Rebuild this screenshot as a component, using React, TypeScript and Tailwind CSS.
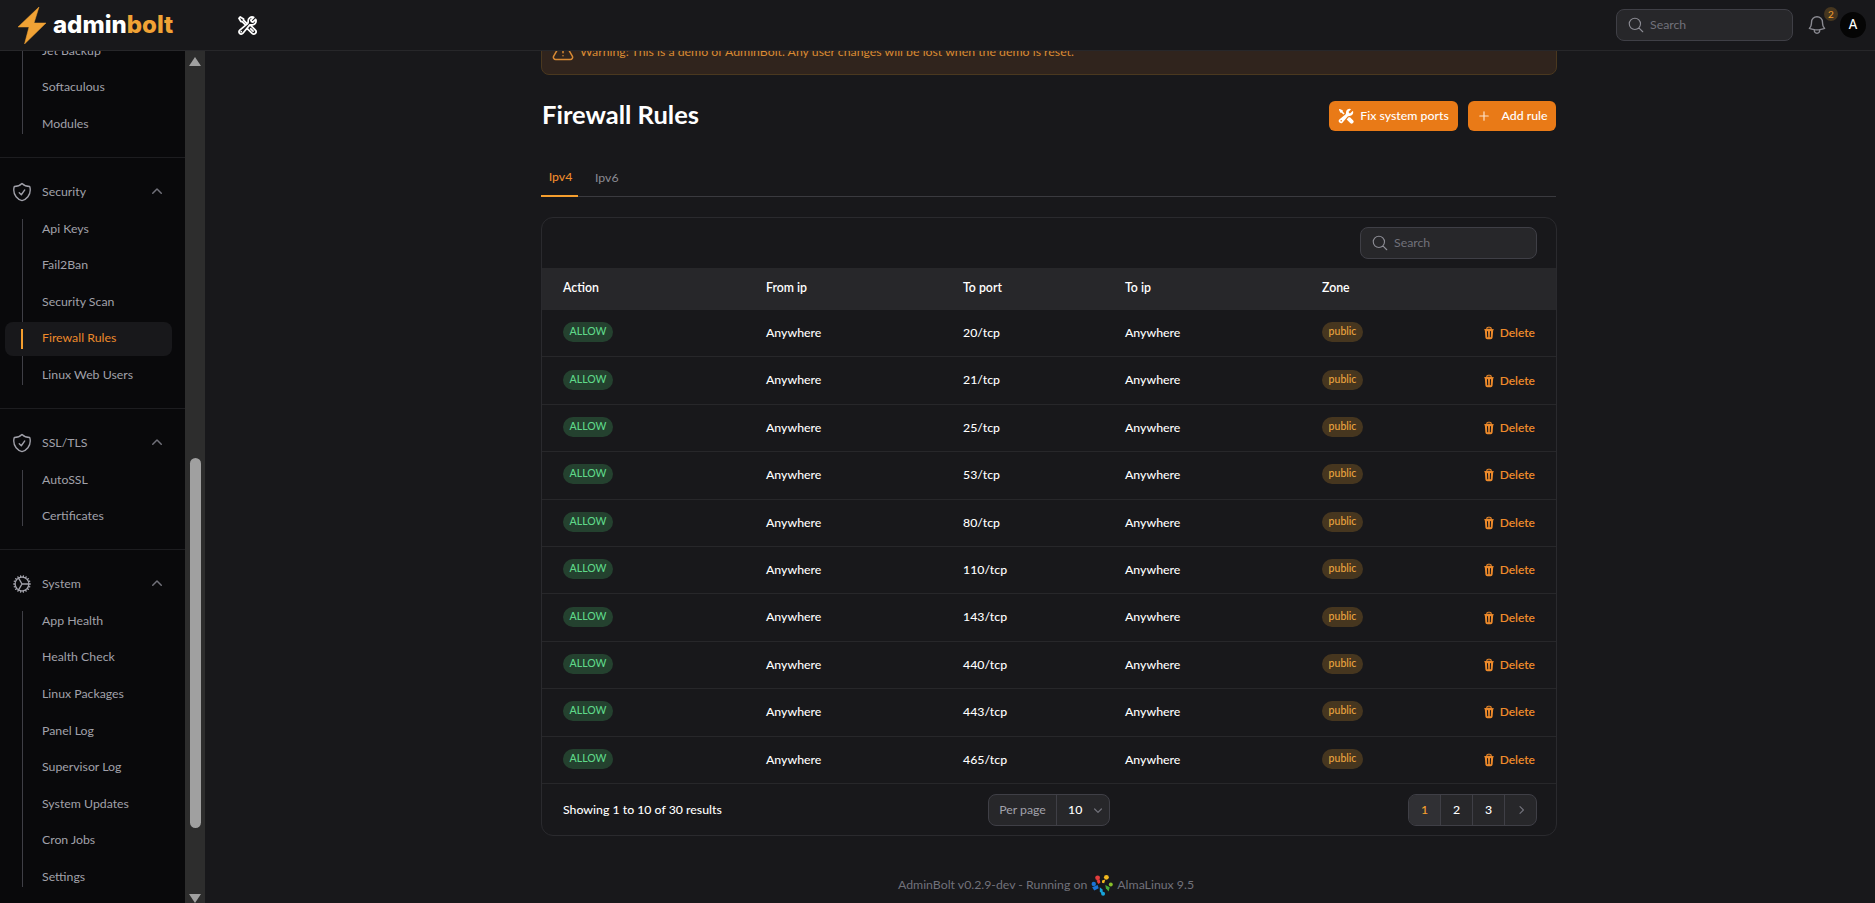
import React from "react";
import {
  HiOutlineWrenchScrewdriver, HiOutlineShieldCheck, HiOutlineCog, HiOutlineBell, HiOutlineMagnifyingGlass,
  HiMiniChevronUp, HiMiniChevronDown, HiMiniChevronRight, HiOutlineExclamationTriangle, HiMiniWrenchScrewdriver, HiMiniPlus, HiMiniTrash,
} from "react-icons/hi2";

const font = "font-['Lato','Liberation_Sans',sans-serif]";

function SubItem({ label, active }: { label: string; active?: boolean }) {
  return (
    <div className={`relative ml-[5px] mr-[13px] flex h-[34px] items-center rounded-lg pl-[37px] text-[12.3px] ${active ? "bg-[#18181b] text-[#ed8a2b]" : "text-[#a1a1aa]"}`}>
      <span>{label}</span>
      {active && <span className="absolute left-[16px] top-[7px] h-[20px] w-[2px] bg-[#f59e2e]" />}
    </div>
  );
}

function Group({ icon, title, items, active }: { icon?: React.ReactNode; title: string; items: string[]; active?: string }) {
  return (
    <div className="border-b border-[#1d1d20] pb-[16px] pt-[17px]">
      <div className="mb-[2.6px] flex h-[34px] items-center pl-[11px] pr-[18px] text-[12.3px] text-[#a1a1aa]">
        <span className="flex w-[31px] text-[#a1a1aa]">{icon}</span>
        <span className="flex-1">{title}</span>
        <HiMiniChevronUp className="h-5 w-5 text-[#71717a]" />
      </div>
      <div className="relative flex flex-col gap-[2.6px]">
        <span className="absolute bottom-[7px] left-[22px] top-[7px] w-px bg-[#3f3f46]" />
        {items.map((i) => (
          <SubItem key={i} label={i} active={i === active} />
        ))}
      </div>
    </div>
  );
}

function SearchBox({ className }: { className: string }) {
  return (
    <div className={`flex h-8 items-center gap-[5px] rounded-lg border border-[#3f3f46] bg-[#27272a] px-[10px] text-[12.3px] text-[#71717a] ${className}`}>
      <HiOutlineMagnifyingGlass className="h-[18px] w-[18px] text-[#8b8b93]" />
      <span>Search</span>
    </div>
  );
}

function Bolt() {
  return (
    <svg viewBox="0 0 28 37" className="h-[37px] w-[28px]">
      <path d="M21 0 L0 20 L11 20 L6.5 37 L28 16 L16 16 Z" fill="#f0a235" stroke="#f0a235" strokeWidth="0.5" strokeLinejoin="round" />
    </svg>
  );
}

function Alma() {
  return (
    <svg viewBox="0 0 20 20" className="h-[22px] w-[22px]">
      <circle cx="6" cy="3.5" r="2.2" fill="#e23d3d" />
      <path d="M5 6 L8 5 L8.5 8 L6.5 9 Z" fill="#e23d3d" />
      <circle cx="14" cy="3" r="2.2" fill="#f2b81f" />
      <path d="M10 6 L13 5 L12 8.5 L10 8 Z" fill="#f2b81f" />
      <circle cx="18" cy="9.5" r="1.8" fill="#86bf2a" />
      <path d="M13 10 L17 12 L16 16 L13.5 13 Z" fill="#45a83a" />
      <circle cx="2.5" cy="9" r="2" fill="#1a73d6" />
      <path d="M1 12 L6 10 L7 13 L3 15 Z" fill="#1a73d6" />
      <path d="M8 12 L10.5 14 L11 19 L8 16 Z" fill="#18a3d9" />
      <circle cx="11" cy="18" r="1.8" fill="#18a3d9" />
    </svg>
  );
}

const ports = ["20/tcp", "21/tcp", "25/tcp", "53/tcp", "80/tcp", "110/tcp", "143/tcp", "440/tcp", "443/tcp", "465/tcp"];

export default function App() {
  return (
    <div className={`flex h-screen flex-col overflow-hidden bg-[#18181b] text-white ${font}`}>
      <header className="relative z-10 flex h-[51px] shrink-0 items-center border-b border-[#27272a] bg-[#18181b] pl-[18px] pr-[9px]">
        <Bolt />
        <div className="ml-[7px] w-[184px] font-['Inter',sans-serif] text-[24px] font-extrabold leading-none">
          admin<span className="text-[#f0a235]">bolt</span>
        </div>
        <HiOutlineWrenchScrewdriver className="h-[21px] w-[21px] stroke-2 text-white" />
        <div className="flex-1" />
        <SearchBox className="w-[177px]" />
        <div className="relative ml-[13px] mr-[12px]">
          <HiOutlineBell className="h-[22px] w-[22px] text-[#8b8b93]" />
          <span className="absolute -top-[7px] left-[18px] flex h-[14px] w-[14px] items-center justify-center rounded-full bg-[#46361f] text-[10px] text-[#f59e2e]">2</span>
        </div>
        <div className="flex h-[26px] w-[26px] items-center justify-center rounded-full bg-[#050505] text-[12.3px] font-semibold">A</div>
      </header>
      <div className="flex min-h-0 flex-1">
        <aside className="flex shrink-0">
          <nav className="w-[185px] overflow-hidden bg-[#09090b]">
            <div className="-mt-[17px]">
              <div className="relative flex flex-col gap-[2.6px] border-b border-[#1d1d20] pb-[16px]">
                <span className="absolute bottom-[23px] left-[22px] top-0 w-px bg-[#3f3f46]" />
                {["Jet Backup", "Softaculous", "Modules"].map((i) => (
                  <SubItem key={i} label={i} />
                ))}
              </div>
              <Group icon={<HiOutlineShieldCheck className="h-[22px] w-[22px]" />} title="Security" items={["Api Keys", "Fail2Ban", "Security Scan", "Firewall Rules", "Linux Web Users"]} active="Firewall Rules" />
              <Group icon={<HiOutlineShieldCheck className="h-[22px] w-[22px]" />} title="SSL/TLS" items={["AutoSSL", "Certificates"]} />
              <Group icon={<HiOutlineCog className="h-[22px] w-[22px]" />} title="System" items={["App Health", "Health Check", "Linux Packages", "Panel Log", "Supervisor Log", "System Updates", "Cron Jobs", "Settings"]} />
            </div>
          </nav>
          <div className="flex w-[20px] flex-col items-center bg-[#2d2d2d] pt-[6px]">
            <span className="h-0 w-0 border-x-[6px] border-b-[9px] border-x-transparent border-b-[#a0a0a0]" />
            <span className="mt-[392px] h-[370px] w-[11px] rounded-full bg-[#a0a0a0]" />
            <span className="mt-auto h-0 w-0 border-x-[6px] border-t-[9px] border-x-transparent border-t-[#a0a0a0]" />
          </div>
        </aside>
        <main className="min-w-0 flex-1 overflow-hidden pl-[336px] pr-[318px]">
          <div className="-mt-[26px]">
            <div className="flex h-[50px] items-center gap-[5px] rounded-lg border border-[#4a381f] bg-[#30241d] px-[9px] pt-[4px] text-[12.3px] text-[#d98a34]">
              <HiOutlineExclamationTriangle className="h-6 w-6" />
              <span>Warning: This is a demo of AdminBolt. Any user changes will be lost when the demo is reset.</span>
            </div>
            <div className="mt-[26px] flex h-[30px] items-center justify-between pl-px pr-px">
              <h1 className="-translate-y-[2px] text-[25.5px] font-bold">Firewall Rules</h1>
              <div className="flex gap-[10px] text-[12.3px] font-medium">
                <button className="flex h-[30px] w-[129px] items-center justify-center gap-[6px] rounded-md bg-[#e97a17]">
                  <HiMiniWrenchScrewdriver className="h-4 w-4" />
                  Fix system ports
                </button>
                <button className="flex h-[30px] w-[88px] items-center justify-center gap-[9px] rounded-md bg-[#e97a17]">
                  <HiMiniPlus className="h-4 w-4 text-[#fde2c8]" />
                  Add rule
                </button>
              </div>
            </div>
            <div className="mr-px mt-[24px] flex h-[42px] border-b border-[#3a3a3f] text-[12.3px]">
              <div className="-mb-px flex w-[37px] items-center justify-center border-b-2 border-[#f59e2e] pl-[2px] pt-[5px] font-medium text-[#ed8a2b]">Ipv4</div>
              <div className="ml-[17px] flex items-center pt-[5px] text-[#8b8b93]">Ipv6</div>
            </div>
            <div className="mt-[20px] overflow-hidden rounded-xl border border-[#2a2a2e]">
              <div className="flex h-[50px] items-center justify-end pr-[19px]">
                <SearchBox className="w-[177px]" />
              </div>
              <table className="w-full table-fixed border-t border-[#27272a] text-left text-[12.3px]">
                <colgroup>
                  <col className="w-[224px]" />
                  <col className="w-[197px]" />
                  <col className="w-[162px]" />
                  <col className="w-[197px]" />
                  <col />
                  <col className="w-[120px]" />
                </colgroup>
                <thead className="bg-[#27272a]">
                  <tr className="h-[41px]">
                    {["Action", "From ip", "To port", "To ip", "Zone", ""].map((h, i) => (
                      <th key={i} className={`-translate-y-px font-semibold ${i === 0 ? "pl-[21px]" : ""}`}>{h}</th>
                    ))}
                  </tr>
                </thead>
                <tbody>
                  {ports.map((p, i) => (
                    <tr key={p} className={`h-[47.4px] font-medium ${i < 9 ? "border-b border-[#27272a]" : ""}`}>
                      <td className="pl-[21px]">
                        <span className="inline-flex h-[20px] w-[50px] -translate-y-px items-center justify-center rounded-full bg-[#24412f] text-[10.5px] text-[#5fd98a]">ALLOW</span>
                      </td>
                      <td>Anywhere</td>
                      <td>{p}</td>
                      <td>Anywhere</td>
                      <td>
                        <span className="inline-flex h-[20px] w-[41px] -translate-y-px items-center justify-center rounded-full bg-[#46361f] text-[10.5px] text-[#e8a23e]">public</span>
                      </td>
                      <td className="pr-[21px]">
                        <span className="flex items-center justify-end gap-[4px] text-[12px] font-semibold text-[#ed8a2b]">
                          <HiMiniTrash className="h-[14px] w-[14px]" />
                          Delete
                        </span>
                      </td>
                    </tr>
                  ))}
                </tbody>
              </table>
              <div className="flex h-[52px] items-center justify-between border-t border-[#27272a] pl-[21px] pr-[19px] text-[12.3px] font-medium">
                <span className="w-[425px]">Showing 1 to 10 of 30 results</span>
                <div className="flex h-8 w-[122px] items-center rounded-lg border border-[#3f3f46] bg-[#27272a]">
                  <span className="flex h-full w-[68px] items-center justify-center border-r border-[#3f3f46] font-normal text-[#a1a1aa]">Per page</span>
                  <span className="ml-[11px]">10</span>
                  <HiMiniChevronDown className="ml-[8px] h-4 w-4 text-[#71717a]" />
                </div>
                <div className="ml-auto flex h-8 w-[129px] divide-x divide-[#3f3f46] overflow-hidden rounded-lg border border-[#3f3f46] bg-[#27272a]">
                  <span className="flex flex-1 items-center justify-center bg-[#303034] text-[#f59e2e]">1</span>
                  <span className="flex flex-1 items-center justify-center">2</span>
                  <span className="flex flex-1 items-center justify-center">3</span>
                  <span className="flex flex-1 items-center justify-center text-[#71717a]"><HiMiniChevronRight className="h-4 w-4" /></span>
                </div>
              </div>
            </div>
            <div className="mt-[38px] flex items-center justify-center gap-[4px] pr-[6px] text-[12.3px] text-[#71717a]">
              <span>AdminBolt v0.2.9-dev - Running on</span>
              <Alma />
              <span>AlmaLinux 9.5</span>
            </div>
          </div>
        </main>
      </div>
    </div>
  );
}
